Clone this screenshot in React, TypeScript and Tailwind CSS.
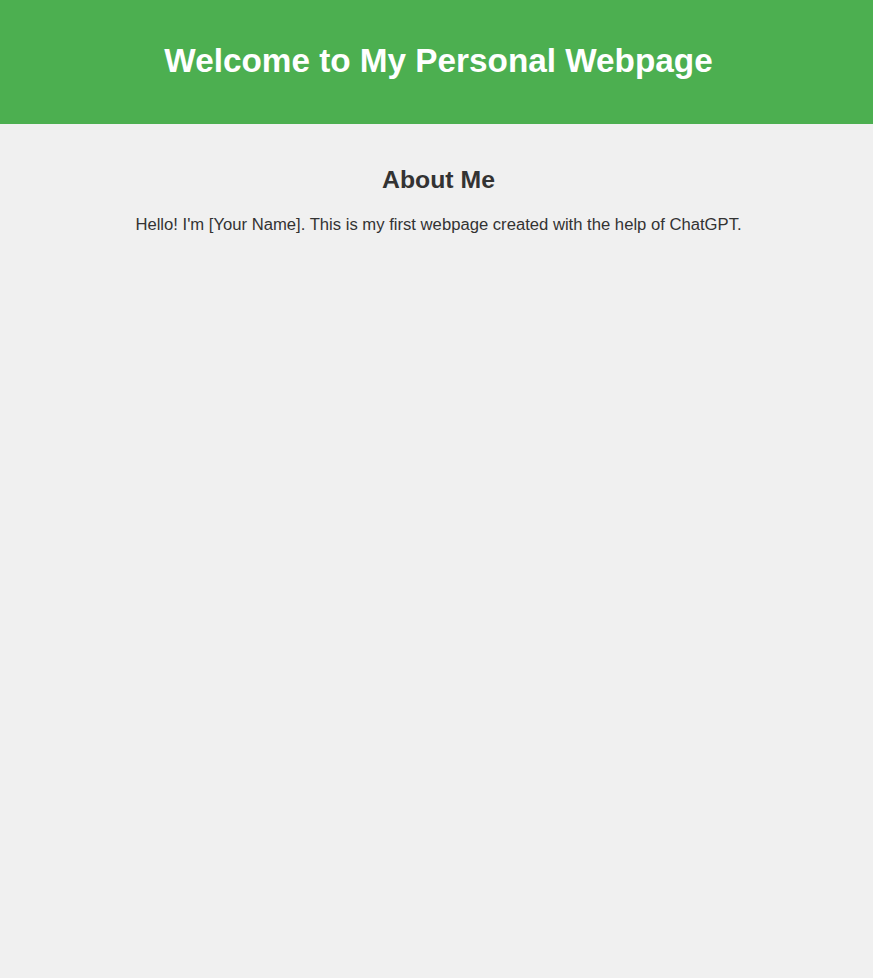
export default function App() {
  return (
    <div
      className="min-h-screen bg-[#f0f0f0] pl-1 text-[#333]"
      style={{ fontFamily: '"Liberation Sans", Arial, sans-serif' }}
    >
      <header className="-ml-1 flex h-[124px] items-center justify-center bg-[#4caf50] pb-[3px] pl-1">
        <h1 className="text-[33.3px] font-bold leading-[38px] text-white">
          Welcome to My Personal Webpage
        </h1>
      </header>

      <main className="flex flex-col items-center pt-[42px] text-center">
        <h2 className="text-[24.8px] font-bold leading-[28px]">About Me</h2>
        <p className="mt-[21px] text-[16.65px] leading-[19px]">
          Hello! I'm [Your Name]. This is my first webpage created with the help of ChatGPT.
        </p>
      </main>
    </div>
  );
}
